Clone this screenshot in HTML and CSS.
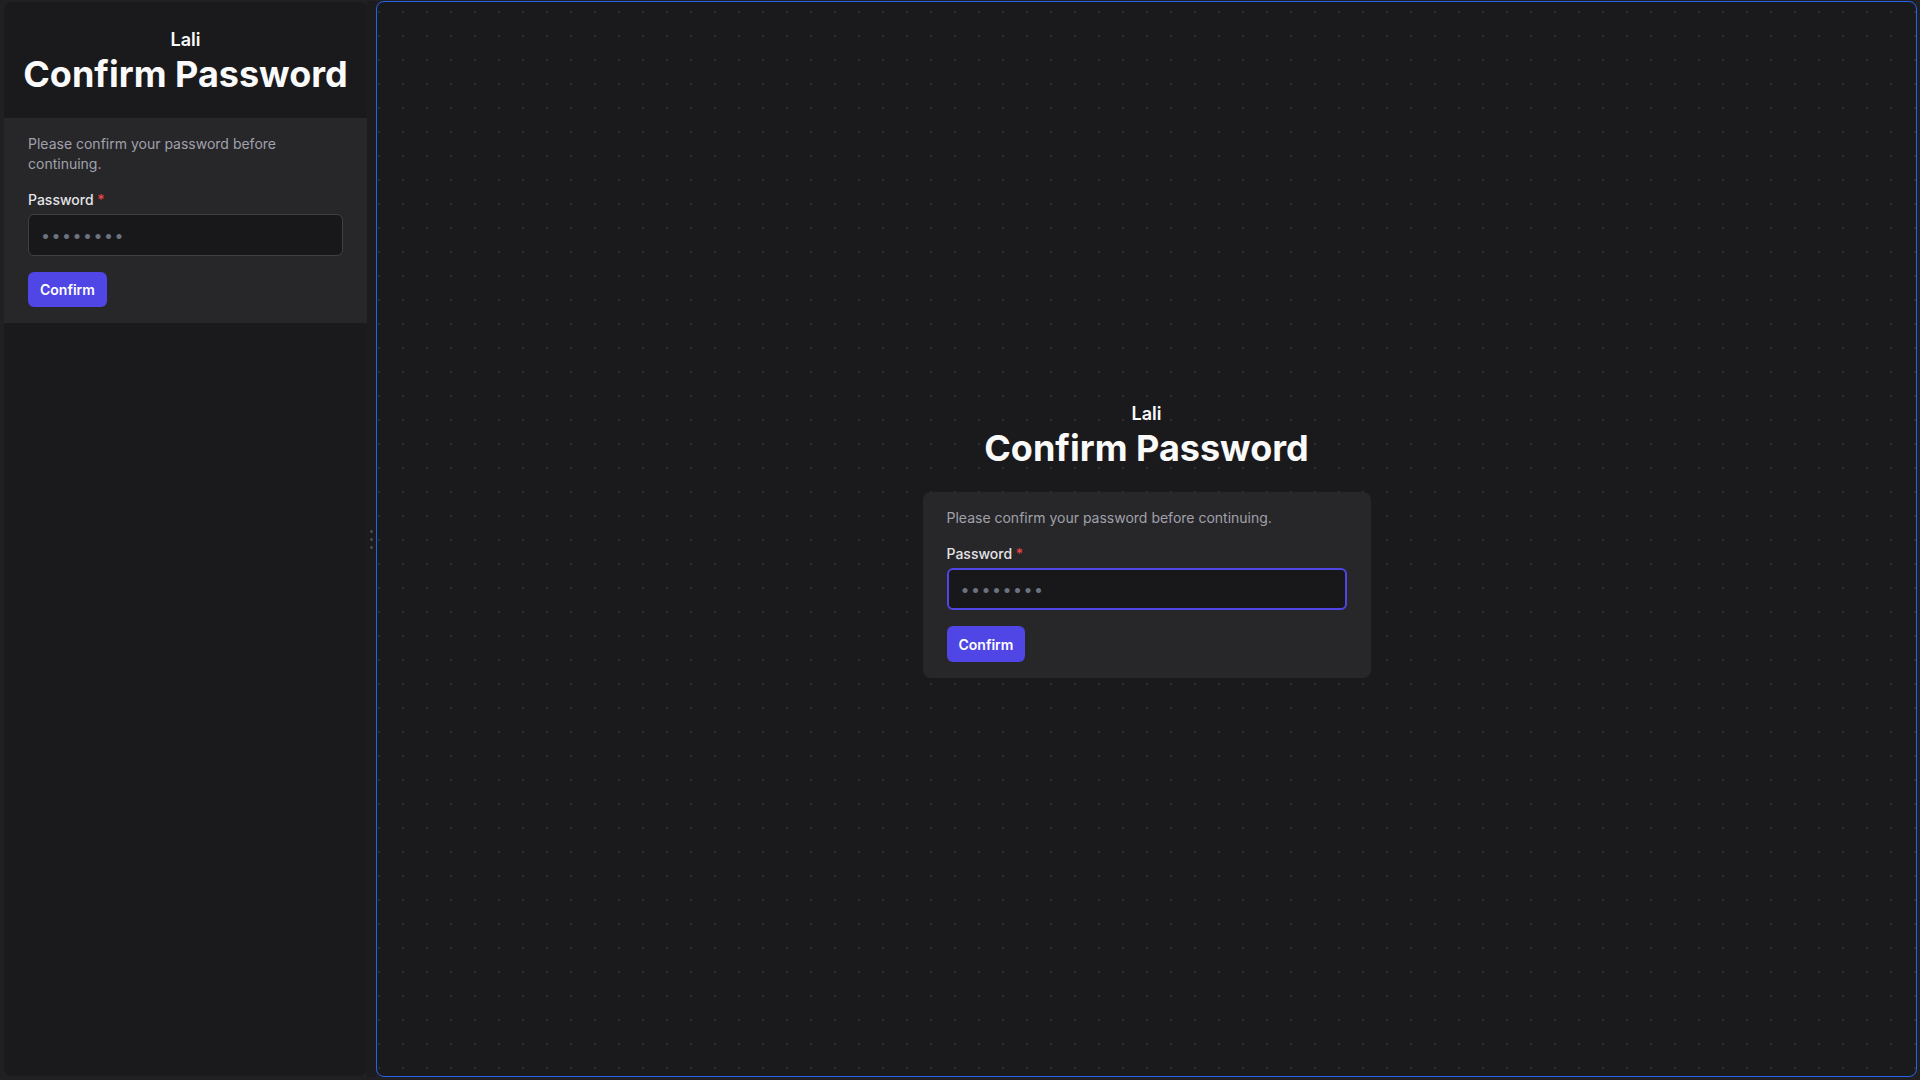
FILE: index.html
```html
<!DOCTYPE html>
<html lang="en">
<head>
<meta charset="utf-8">
<title>Confirm Password</title>
<link rel="stylesheet" href="styles.css">
</head>
<body>
<div class="app">
  <aside class="side">
    <div class="head">
      <div class="brand">Lali</div>
      <h1 class="title">Confirm Password</h1>
    </div>
    <form class="card card-side">
      <p class="note">Please confirm your password before continuing.</p>
      <div class="field">
        <label class="label">Password <span class="req">*</span></label>
        <input class="input" type="password" placeholder="••••••••">
      </div>
      <button type="button" class="btn">Confirm</button>
    </form>
  </aside>
  <div class="handle"><span></span><span></span><span></span></div>
  <main class="preview">
    <div class="stack">
      <div class="head">
        <div class="brand">Lali</div>
        <h1 class="title">Confirm Password</h1>
      </div>
      <form class="card card-main">
        <p class="note">Please confirm your password before continuing.</p>
        <div class="field">
          <label class="label">Password <span class="req">*</span></label>
          <input class="input input-focus" type="password" placeholder="••••••••">
        </div>
        <button type="button" class="btn">Confirm</button>
      </form>
    </div>
  </main>
</div>
</body>
</html>
```

FILE: styles.css
```css
* { box-sizing: border-box; }
html, body { margin: 0; height: 100%; }
body {
  background: #202023;
  font-family: Inter, "Noto Sans", sans-serif;
  color: #f4f4f5;
}
.app {
  display: flex;
  height: 100vh;
  padding: 1px 3px 3px 4px;
}
.side {
  width: 363px;
  flex: none;
  margin-top: 1px;
  margin-bottom: 1px;
  background: #1a1a1d;
  border-radius: 8px;
  overflow: hidden;
  padding-top: 24px;
}
.handle {
  width: 9px;
  flex: none;
  display: flex;
  flex-direction: column;
  align-items: center;
  justify-content: center;
  gap: 5px;
  background: #1c1c1f;
}
.handle span {
  width: 3px;
  height: 3px;
  border-radius: 50%;
  background: #4b4b52;
}
.preview {
  flex: 1;
  border: 1px solid #2563eb;
  border-radius: 8px;
  background-color: #1a1a1d;
  background-image: radial-gradient(circle, #2e2e32 1px, transparent 1.4px);
  background-size: 24px 24px;
  background-position: -10px -2px;
  display: flex;
  align-items: center;
  justify-content: center;
}
.stack { width: 448px; }
.head { text-align: center; }
.brand {
  font-size: 18px;
  line-height: 28px;
  font-weight: 600;
  color: #fafafa;
}
.title {
  margin: 0;
  font-size: 36px;
  line-height: 40px;
  font-weight: 700;
  color: #fafafa;
}
.card {
  margin-top: 24px;
  background: #27272a;
  padding: 16px 24px;
  display: flex;
  flex-direction: column;
  gap: 16px;
}
.card-main { border-radius: 8px; }
.note {
  margin: 0;
  font-size: 14px;
  line-height: 20px;
  color: #a1a1aa;
}
.field { display: flex; flex-direction: column; gap: 4px; }
.label {
  font-size: 14px;
  line-height: 20px;
  font-weight: 500;
  color: #e4e4e7;
}
.req { color: #ef4444; }
.input {
  height: 42px;
  width: 100%;
  background: #18181b;
  border: 1px solid #3f3f46;
  border-radius: 6px;
  padding: 0 12px;
  font-family: Inter, sans-serif;
  font-size: 16px;
  letter-spacing: 1.5px;
  color: #e4e4e7;
  outline: none;
}
.input::placeholder { color: #6b7280; }
.input-focus {
  border: 2px solid #4f46e5;
  height: 42px;
}
.btn {
  align-self: flex-start;
  background: #4f46e5;
  color: #ffffff;
  border: none;
  border-radius: 6px;
  height: 35px;
  padding: 0 12px;
  font-family: Inter, sans-serif;
  font-size: 14px;
  font-weight: 600;
  cursor: pointer;
}
.card-main .btn { height: 36px; }
```
